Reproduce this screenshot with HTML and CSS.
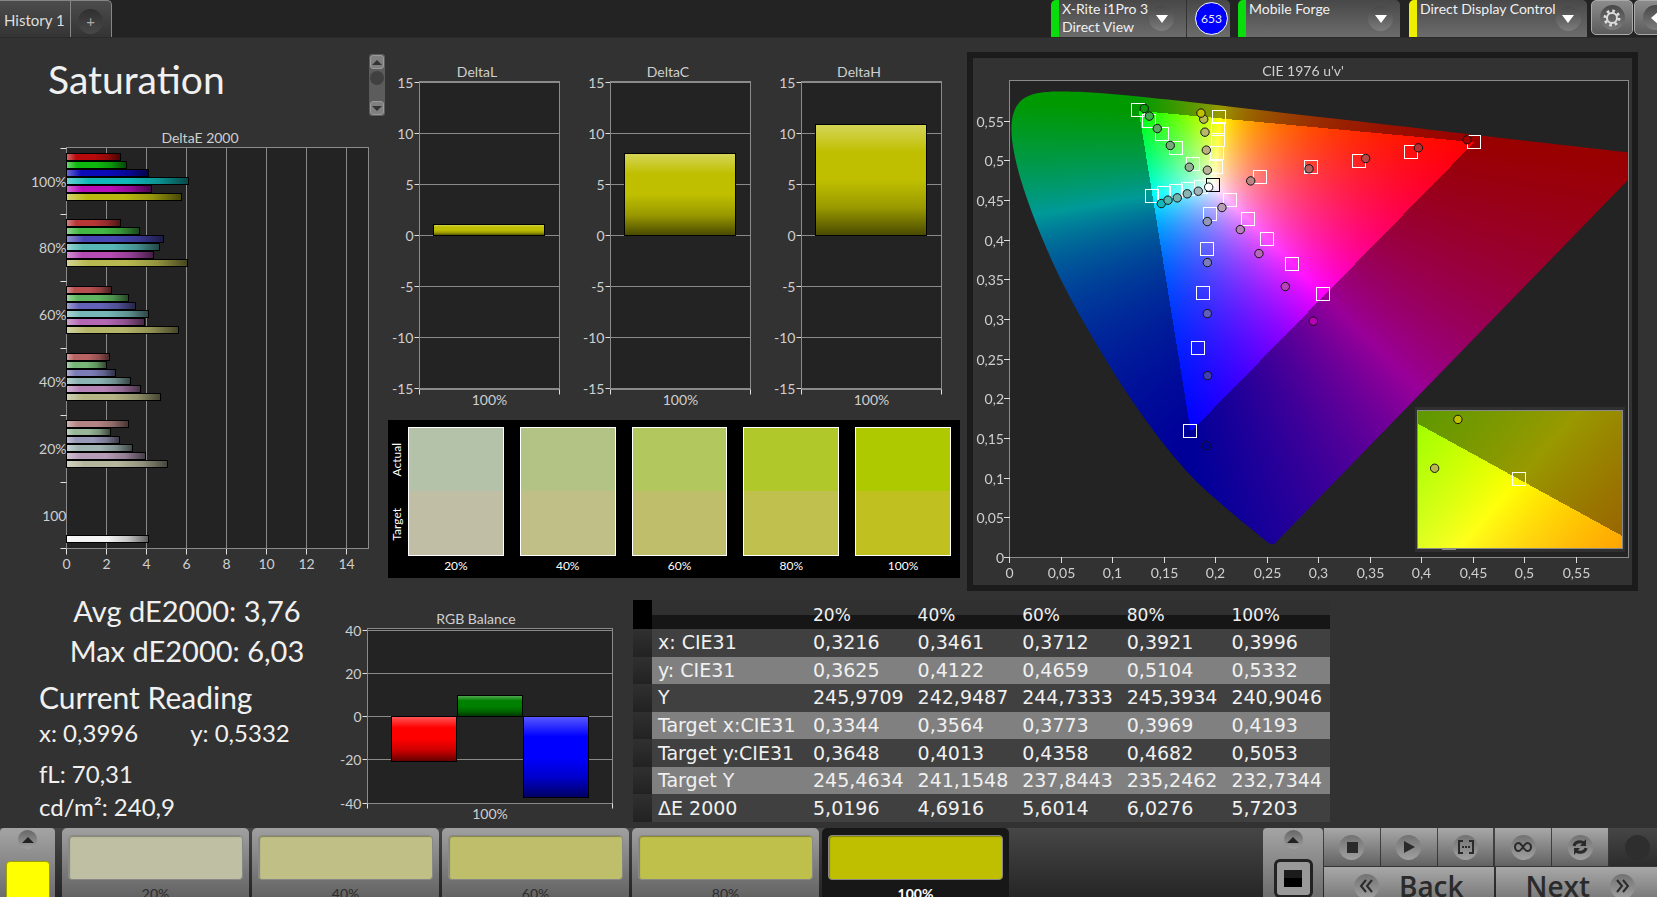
FILE: index.html
```
<!DOCTYPE html>
<html lang="en">
<head>
  <meta charset="UTF-8">
  <meta name="viewport" content="width=device-width, initial-scale=1.0">
  <title>Saturation - History 1</title>
  <link rel="stylesheet" href="styles.css">
</head>
<body>
<header class="topbar">
  <nav class="tabs">
    <button class="tab">History 1</button>
    <button class="tab tab-add" aria-label="Add history"><span class="dimple">+</span></button>
  </nav>
  <div class="devices">
    <button class="device device-meter">
      <span class="device-name">X-Rite i1Pro 3<br>Direct View</span>
      <span class="dimple"><svg width="12" height="8" viewBox="0 0 12 8"><path d="M0 0h12L6 8z" fill="#fff"/></svg></span>
    </button>
    <span class="meter-count"><span class="badge">653</span></span>
    <button class="device device-source">
      <span class="device-name">Mobile Forge</span>
      <span class="dimple"><svg width="12" height="8" viewBox="0 0 12 8"><path d="M0 0h12L6 8z" fill="#fff"/></svg></span>
    </button>
    <button class="device device-display">
      <span class="device-name">Direct Display Control</span>
      <span class="dimple"><svg width="12" height="8" viewBox="0 0 12 8"><path d="M0 0h12L6 8z" fill="#fff"/></svg></span>
    </button>
    <button class="tool" aria-label="Settings">
      <span class="dimple">
        <svg width="18" height="18" viewBox="0 0 18 18" fill="none" stroke="#ddd">
          <circle cx="9" cy="9" r="5" stroke-width="2"/>
          <circle cx="9" cy="9" r="7" stroke-width="3" stroke-dasharray="2.6 2.9"/>
        </svg>
      </span>
    </button>
    <button class="tool" aria-label="Collapse">
      <span class="dimple"><svg width="8" height="14" viewBox="0 0 8 14"><path d="M8 0v14L0 7z" fill="#fff"/></svg></span>
    </button>
  </div>
</header>

<main class="workspace">
  <section class="row row-charts">
    <div class="col-delta-e">
      <div class="title-row">
        <h1>Saturation</h1>
        <div class="scroller">
          <button aria-label="Previous"><svg width="10" height="5" viewBox="0 0 10 5"><path d="M0 5h10L5 0z" fill="#333"/></svg></button>
          <span class="thumb"></span>
          <button aria-label="Next"><svg width="10" height="5" viewBox="0 0 10 5"><path d="M0 0h10L5 5z" fill="#333"/></svg></button>
        </div>
      </div>
      <svg class="chart" id="deltaE" viewBox="0 0 385 455"></svg>
    </div>

    <div class="col-middle">
      <div class="delta-charts">
        <svg class="chart" id="deltaL" viewBox="0 0 191 350"></svg>
        <svg class="chart" id="deltaC" viewBox="0 0 191 350"></svg>
        <svg class="chart" id="deltaH" viewBox="0 0 191 350"></svg>
      </div>
      <div class="swatches">
        <div class="swatch-side"><span>Actual</span><span>Target</span></div>
        <figure class="swatch swatch-20"><div class="actual"></div><div class="target"></div><figcaption>20%</figcaption></figure>
        <figure class="swatch swatch-40"><div class="actual"></div><div class="target"></div><figcaption>40%</figcaption></figure>
        <figure class="swatch swatch-60"><div class="actual"></div><div class="target"></div><figcaption>60%</figcaption></figure>
        <figure class="swatch swatch-80"><div class="actual"></div><div class="target"></div><figcaption>80%</figcaption></figure>
        <figure class="swatch swatch-100"><div class="actual"></div><div class="target"></div><figcaption>100%</figcaption></figure>
      </div>
    </div>

    <div class="col-cie">
      <svg class="chart" id="cie" viewBox="0 0 659 527">
        <foreignObject x="37" y="23" width="618" height="476">
          <canvas id="gamut" width="618" height="476"></canvas>
        </foreignObject>
      </svg>
    </div>
  </section>

  <section class="row row-readings">
    <div class="readings">
      <div class="summary">
        <p>Avg dE2000: 3,76</p>
        <p>Max dE2000: 6,03</p>
      </div>
      <h2>Current Reading</h2>
      <p class="reading reading-xy"><span>x: 0,3996</span><span>y: 0,5332</span></p>
      <p class="reading">fL: 70,31</p>
      <p class="reading">cd/m²: 240,9</p>
    </div>

    <svg class="chart" id="rgbBalance" viewBox="0 0 285 223"></svg>

    <div class="data">
      <table class="data-table">
        <thead>
        <tr><th class="handle"></th><th class="name"></th><th>20%</th><th>40%</th><th>60%</th><th>80%</th><th>100%</th></tr>
        </thead>
        <tbody>
        <tr><td class="handle"></td><td>x: CIE31</td><td>0,3216</td><td>0,3461</td><td>0,3712</td><td>0,3921</td><td>0,3996</td></tr>
        <tr><td class="handle"></td><td>y: CIE31</td><td>0,3625</td><td>0,4122</td><td>0,4659</td><td>0,5104</td><td>0,5332</td></tr>
        <tr><td class="handle"></td><td>Y</td><td>245,9709</td><td>242,9487</td><td>244,7333</td><td>245,3934</td><td>240,9046</td></tr>
        <tr><td class="handle"></td><td>Target x:CIE31</td><td>0,3344</td><td>0,3564</td><td>0,3773</td><td>0,3969</td><td>0,4193</td></tr>
        <tr><td class="handle"></td><td>Target y:CIE31</td><td>0,3648</td><td>0,4013</td><td>0,4358</td><td>0,4682</td><td>0,5053</td></tr>
        <tr><td class="handle"></td><td>Target Y</td><td>245,4634</td><td>241,1548</td><td>237,8443</td><td>235,2462</td><td>232,7344</td></tr>
        <tr><td class="handle"></td><td>ΔE 2000</td><td>5,0196</td><td>4,6916</td><td>5,6014</td><td>6,0276</td><td>5,7203</td></tr>
        </tbody>
      </table>
    </div>
  </section>
</main>

<footer class="bottombar">
  <div class="side-panel side-color">
    <button class="dimple" aria-label="Expand colors"><svg width="12" height="6" viewBox="0 0 12 6"><path d="M0 6h12L6 0z" fill="#222"/></svg></button>
    <button class="color-chip" aria-label="Yellow"></button>
  </div>
  <div class="steps">
    <button class="step step-20"><span class="step-color"></span>20%</button>
    <button class="step step-40"><span class="step-color"></span>40%</button>
    <button class="step step-60"><span class="step-color"></span>60%</button>
    <button class="step step-80"><span class="step-color"></span>80%</button>
    <button class="step step-100 active"><span class="step-color"></span>100%</button>
  </div>
  <div class="side-panel side-window">
    <button class="dimple" aria-label="Expand window options"><svg width="12" height="6" viewBox="0 0 12 6"><path d="M0 6h12L6 0z" fill="#222"/></svg></button>
    <button class="window-chip" aria-label="Window size"><span></span></button>
  </div>
  <div class="transport">
    <div class="transport-row">
      <button aria-label="Stop"><span class="dimple"><svg width="12" height="12" viewBox="0 0 12 12"><path d="M1 1h11v11H1z" fill="#2a2a2a"/></svg></span></button>
      <button aria-label="Play"><span class="dimple"><svg width="12" height="14" viewBox="0 0 12 14"><path d="M1 1l11 6-11 6z" fill="#2a2a2a"/></svg></span></button>
      <button class="pair-end" aria-label="Measure range"><span class="dimple">
        <svg width="16" height="14" viewBox="0 0 16 14" fill="none" stroke="#2a2a2a" stroke-width="2"><path d="M5 1H1v12h4M11 1h4v12h-4M4 7h2M7 7h2M10 7h2"/></svg>
      </span></button>
      <button aria-label="Continuous"><span class="dimple">
        <svg width="18" height="10" viewBox="0 0 18 10" fill="none" stroke="#2a2a2a" stroke-width="2"><path d="M9 5C7 2 6 1 4.500 1a3.500 4 0 0 0 0 8C6 9 7 8 9 5s3-4 4.500-4a3.500 4 0 0 1 0 8C12 9 11 8 9 5z"/></svg>
      </span></button>
      <button aria-label="Refresh"><span class="dimple">
        <svg width="16" height="16" viewBox="0 0 16 16" fill="none" stroke="#2a2a2a" stroke-width="3"><path d="M2 7a6 5 0 0 1 10-3M14 9a6 5 0 0 1-10 3"/><path d="M14 0v7H8zM2 16V9h6z" fill="#2a2a2a" stroke="none"/></svg>
      </span></button>
      <button class="off" aria-label="Record" disabled><span class="dimple"></span></button>
    </div>
    <div class="transport-row transport-nav">
      <button class="pair-end"><span class="dimple">
        <svg width="14" height="14" viewBox="0 0 14 14" fill="none" stroke="#2a2a2a" stroke-width="2"><path d="M7 1L2 7l5 6M13 1L8 7l5 6"/></svg>
      </span><span class="nav-text">Back</span></button>
      <button><span class="nav-text">Next</span><span class="dimple">
        <svg width="14" height="14" viewBox="0 0 14 14" fill="none" stroke="#2a2a2a" stroke-width="2"><path d="M1 1l5 6-5 6M7 1l5 6-5 6"/></svg>
      </span></button>
    </div>
  </div>
</footer>
<script src="charts.js"></script>
</body>
</html>
```
FILE: styles.css
```
:root {
  --page: #323232;
  --plot: #232323;
  --line: #8a8a8a;
  --text: #f0f0f0;
  --axis: #cfcfcf;
}

* {
  margin: 0;
  padding: 0;
  box-sizing: border-box;
}

body {
  display: flex;
  flex-direction: column;
  height: 100vh;
  overflow: hidden;
  background: var(--page);
  color: var(--text);
  font-family: Lato, Calibri, sans-serif;
  font-size: 14px;
}

button {
  border: none;
  background: none;
  color: inherit;
  font: inherit;
  cursor: pointer;
}

.dimple {
  display: flex;
  flex: none;
  align-items: center;
  justify-content: center;
  width: 25px;
  height: 25px;
  border-radius: 50%;
  background: linear-gradient(#484848, #7c7c7c);
}

/* top bar */
.topbar {
  display: flex;
  flex: none;
  justify-content: space-between;
  height: 38px;
  background: var(--plot);
  border-bottom: 1px solid #2a2a2a;
  overflow: hidden;
}

.tabs {
  display: flex;
  height: 37px;
  border: 1px solid #868686;
  border-width: 1px 1px 0 0;
  border-radius: 0 5px 0 0;
  background: linear-gradient(#4c4c4c, #343434);
}

.tab {
  width: 70px;
  color: #ddd;
  padding: 2px 4px 0;
  font-size: 15px;
  text-align: left;
  white-space: nowrap;
}

.tab-add {
  width: 41px;
  padding: 4px 7px 0;
  border-left: 1px solid #868686;
}

.tab-add .dimple {
  background: linear-gradient(#303030, #484848);
  color: #aaa;
}

.devices {
  display: flex;
  margin-right: -20px;
}

.device {
  display: flex;
  align-items: center;
  justify-content: space-between;
  height: 37px;
  margin-right: 9px;
  padding: 0 7px 0 3px;
  border-left: 8px solid #0bdc0b;
  border-radius: 5px 5px 0 0;
  background: linear-gradient(#484848, #6c6c6c);
  text-align: left;
}

.device-name {
  align-self: flex-start;
  line-height: 18px;
  white-space: nowrap;
}

.device-meter {
  width: 135px;
  margin-right: 0;
  padding-right: 12px;
  border-radius: 5px 0 0 0;
}

.device-source {
  width: 162px;
}

.device-display {
  width: 178px;
  margin-right: 4px;
  border-left-color: #eeee00;
}

.meter-count {
  width: 44px;
  height: 37px;
  margin-right: 8px;
  padding: 2px 2px 0 8px;
  border-left: 1px solid #333;
  border-radius: 0 5px 0 0;
  background: linear-gradient(#484848, #6c6c6c);
}

.badge {
  display: flex;
  align-items: center;
  justify-content: center;
  width: 33px;
  height: 33px;
  border: 1px solid #fff;
  border-radius: 50%;
  background: #00f;
  font-size: 12px;
}

.tool {
  display: flex;
  align-items: center;
  justify-content: center;
  width: 42px;
  height: 35px;
  margin-right: 1px;
  border: 1px solid #aaa;
  border-radius: 5px;
  background: linear-gradient(#8c8c8c, #5c5c5c);
}

/* workspace */
.workspace {
  flex: 1;
  min-height: 0;
}

.row {
  display: grid;
}

.row-charts {
  grid-template-columns: 385fr 582fr 690fr;
  padding-top: 14px;
}

.row-readings {
  grid-template-columns: 335fr 285fr 1037fr;
  align-items: start;
}

.chart {
  display: block;
  width: 100%;
}

.chart text {
  fill: var(--axis);
  font-size: 14px;
}

.chart .plot {
  fill: var(--plot);
}

.chart .frame {
  fill: none;
  stroke: var(--line);
}

.chart .grid {
  stroke: var(--line);
}

.chart .tick {
  stroke: #e0e0e0;
}

.chart .bar {
  stroke: #000;
}

.chart .target-mark {
  fill: none;
  stroke: #fff;
}

.chart .reading-mark {
  stroke: #111;
}

#gamut,
#insetGamut {
  display: block;
}

.title-row {
  display: flex;
  justify-content: space-between;
  height: 72px;
  padding-left: 48px;
}

h1 {
  font-size: 39px;
  font-weight: 400;
  line-height: 54px;
}

.scroller {
  display: flex;
  flex-direction: column;
  align-items: center;
  width: 16px;
  height: 62px;
  margin-top: 2px;
  padding: 1px;
  border-radius: 3px;
  background: #5c5c5c;
}

.scroller button {
  display: flex;
  align-items: center;
  justify-content: center;
  width: 14px;
  height: 14px;
  border: 1px solid #999;
  border-radius: 3px;
  background: #808080;
}

.scroller .thumb {
  width: 14px;
  height: 14px;
  margin: 2px 0 auto;
  border-radius: 50%;
  background: #404040;
}

.delta-charts {
  display: grid;
  grid-template-columns: repeat(3, 1fr);
  padding: 10px 9px 8px 0;
}

.swatches {
  display: grid;
  grid-template-columns: 4px repeat(5, 1fr);
  column-gap: 16px;
  margin: 0 7px 0 3px;
  padding: 7px 9px 0 0;
  height: 158px;
  background: #000;
  color: #fff;
  font-size: 12px;
}

.swatch-side {
  display: flex;
  flex-direction: column;
  justify-content: space-around;
  align-items: center;
  height: 129px;
  margin-right: -12px;
}

.swatch-side span {
  writing-mode: vertical-rl;
  transform: rotate(180deg);
}

.swatch .actual,
.swatch .target {
  height: 64px;
  border: 1px solid #fff;
  border-bottom: none;
}

.swatch .target {
  height: 65px;
  border: 1px solid #fff;
  border-top: none;
}

.swatch figcaption {
  line-height: 20px;
  text-align: center;
}

.swatch-20 .actual { background: #b4c2a9; }
.swatch-40 .actual { background: #b2c385; }
.swatch-60 .actual { background: #b2c75e; }
.swatch-80 .actual { background: #b0c829; }
.swatch-100 .actual { background: #afc900; }
.swatch-20 .target { background: #c0bfa5; }
.swatch-40 .target { background: #c0bf87; }
.swatch-60 .target { background: #bfbf6b; }
.swatch-80 .target { background: #bfc04d; }
.swatch-100 .target { background: #c1c021; }

.col-cie {
  margin-right: 19px;
  border: 6px solid #1b1b1b;
}

/* readings */
.readings {
  padding-left: 39px;
  white-space: nowrap;
}

.summary {
  width: 296px;
  font-size: 29px;
  line-height: 40px;
  text-align: center;
}

.readings h2 {
  font-size: 30px;
  font-weight: 400;
  line-height: 44px;
  padding-top: 4px;
}

.reading {
  font-size: 24px;
  line-height: 33px;
}

.reading-xy {
  display: flex;
  gap: 52px;
  height: 38px;
  line-height: 28px;
}

#rgbBalance {
  margin-top: 14px;
}

.data {
  padding: 9px 0 0 13px;
}

.data-table {
  width: 697px;
  height: 222px;
  table-layout: fixed;
  border-collapse: collapse;
  font-family: "DejaVu Sans", sans-serif;
  font-size: 19px;
}

.data-table th {
  height: 29px;
  padding-left: 6px;
  background: linear-gradient(#303030 50%, #161616 50%);
  font-size: 17px;
  font-weight: 400;
  text-align: left;
}

.data-table td {
  padding-left: 6px;
  background: #404040;
  line-height: 27px;
  white-space: nowrap;
}

.data-table tr:nth-child(even) td {
  background: #808080;
}

.data-table .name {
  width: 155px;
}

.data-table th.handle {
  width: 19px;
  background: #000;
}

.data-table tbody tr td.handle {
  background: linear-gradient(#303030, #222);
}

/* bottom bar */
.bottombar {
  display: flex;
  flex: none;
  height: 69px;
  overflow: hidden;
  background: linear-gradient(#464646, #262626);
}

.side-panel {
  display: flex;
  flex: none;
  flex-direction: column;
  align-items: center;
  height: 90px;
  border-radius: 4px 4px 0 0;
  background: linear-gradient(#a4a4a4, #5c5c5c);
}

.side-panel .dimple {
  width: 19px;
  height: 19px;
  margin-top: 2px;
  background: linear-gradient(#666, #a0a0a0);
}

.side-color {
  width: 55px;
}

.color-chip {
  width: 44px;
  height: 60px;
  margin-top: 12px;
  border: 1px solid #a0a000;
  border-radius: 4px;
  background: #ff0;
}

.steps {
  display: flex;
  gap: 3px;
  margin-left: 7px;
  flex: 1;
}

.step {
  display: flex;
  flex: none;
  flex-direction: column;
  gap: 5px;
  align-items: center;
  width: 187px;
  height: 90px;
  padding-top: 7px;
  border-radius: 5px 5px 0 0;
  background: linear-gradient(#a0a0a0, #505050);
  color: #2c2c2c;
}

.step-color {
  flex: none;
  width: 175px;
  height: 45px;
  border: 1px solid #888;
  border-radius: 4px;
  box-shadow: inset 1px 1px 1px rgba(0, 0, 0, 0.3);
}

.step-20 .step-color { background: #bfbfa3; }
.step-40 .step-color { background: #bfbf86; }
.step-60 .step-color { background: #bfbf6b; }
.step-80 .step-color { background: #bfbf4b; }
.step-100 .step-color { background: #bfbf00; }

.step.active {
  background: #171717;
  color: #fff;
  font-weight: 700;
}

.side-window {
  width: 60px;
}

.side-window .dimple {
  margin-bottom: 2px;
}

.window-chip {
  display: flex;
  flex: none;
  align-items: center;
  justify-content: center;
  width: 39px;
  height: 39px;
  margin-top: 8px;
  border: 3px solid #222;
  border-radius: 6px;
  background: #999;
}

.window-chip span {
  width: 18px;
  height: 17px;
  background: linear-gradient(#1c1c1c 50%, #000 50%);
}

.transport {
  flex: none;
  width: 341px;
  margin: 0 -8px 0 1px;
}

.transport-row {
  display: flex;
  gap: 1px;
  height: 38px;
  margin-bottom: 1px;
}

.transport button {
  display: flex;
  flex: 1;
  align-items: center;
  justify-content: center;
  background: linear-gradient(#a8a8a8, #626262);
}

.transport .dimple {
  background: linear-gradient(#727272, #a0a0a0);
}

.transport .pair-end {
  margin-right: 1px;
}

.transport .off {
  background: linear-gradient(#464646, #2c2c2c);
}

.transport .off .dimple {
  background: #2e2e2e;
}

.transport .transport-nav button {
  gap: 20px;
  height: 60px;
  padding-bottom: 22px;
  color: #2a2a2a;
  background: linear-gradient(#a8a8a8, #505050);
}

.nav-text {
  font-family: "Open Sans", sans-serif;
  font-size: 28px;
  font-weight: 600;
}
```
FILE: charts.js
```
const NS = 'http://www.w3.org/2000/svg';

function add(parent, name, attrs, text) {
  const node = document.createElementNS(NS, name);
  for (const key in attrs) node.setAttribute(key, attrs[key]);
  if (text !== undefined) node.textContent = text;
  parent.appendChild(node);
  return node;
}

function line(svg, cls, x1, y1, x2, y2) {
  add(svg, 'line', { class: cls, x1: x1, y1: y1, x2: x2, y2: y2 });
}

function label(svg, x, y, anchor, text) {
  add(svg, 'text', { x: x, y: y, 'text-anchor': anchor }, text);
}

// light to dark sheen laid over every bar
function gloss(svg, id, vertical) {
  const defs = add(svg, 'defs', {});
  const grad = add(defs, 'linearGradient', vertical
    ? { id: id, x1: 0, y1: 0, x2: 0, y2: 1 }
    : { id: id, x1: 0, y1: 0, x2: 1, y2: 0 });
  [[0, '#fff', vertical ? 0.35 : 0.4], [vertical ? 0.25 : 0.18, '#fff', 0], [0.5, '#000', 0], [0.75, '#000', 0.2], [1, '#000', 0.62]]
    .forEach(s => add(grad, 'stop', { offset: s[0], 'stop-color': s[1], 'stop-opacity': s[2] }));
}

function bar(svg, x, y, w, h, color, glossId) {
  add(svg, 'rect', { x: x, y: y, width: w, height: h, fill: color });
  add(svg, 'rect', { class: 'bar', x: x, y: y, width: w, height: h, fill: 'url(#' + glossId + ')' });
}

// DeltaE 2000
function drawDeltaE() {
  const svg = document.getElementById('deltaE');
  const left = 66.5, top = 23.5, right = 368.5, bottom = 424.5, unit = 20.06;
  const step = (bottom - top) / 6;
  const groups = [
    ['100%', [2.68, 2.98, 4.07, 6.06, 4.22, 5.72], ['#b80a0a', '#0eb80e', '#0a0ab8', '#10b8b8', '#b80eb8', '#b8b810']],
    ['80%', [2.68, 3.62, 4.82, 4.62, 4.32, 6.03], ['#b83636', '#44b844', '#4646b4', '#58b6b6', '#b44cb4', '#b8b850']],
    ['60%', [2.23, 3.07, 3.42, 4.07, 3.89, 5.60], ['#b85050', '#60b660', '#6262b6', '#76b6b6', '#b468b4', '#b6b66a']],
    ['40%', [2.13, 1.98, 2.43, 3.17, 3.67, 4.69], ['#b86464', '#78b678', '#7c7cb6', '#8cb4b4', '#b684b6', '#b4b484']],
    ['20%', [3.07, 2.18, 2.62, 3.27, 3.92, 5.02], ['#b48484', '#98b698', '#9898b8', '#a0b4b4', '#b69cb6', '#b6b69e']],
    ['100', [0, 0, 0, 0, 0, 0, 4.07], ['', '', '', '', '', '', '#f4f4f4']]
  ];
  gloss(svg, 'glossH', false);
  add(svg, 'rect', { class: 'plot', x: left, y: top, width: right - left, height: bottom - top });
  for (let v = 0; v < 15; v += 2) {
    const x = Math.round(left + v * unit) - 0.5;
    line(svg, 'grid', x, top, x, bottom);
    line(svg, 'tick', x, bottom, x, bottom + 6);
    label(svg, x, 445, 'middle', v);
  }
  add(svg, 'rect', { class: 'frame', x: left, y: top, width: right - left, height: bottom - top });
  groups.forEach((g, i) => {
    const y = Math.round(top + i * step);
    line(svg, 'tick', left - 6, y + 0.5, left, y + 0.5);
    label(svg, left, y + 39, 'end', g[0]);
    g[1].forEach((v, n) => {
      if (v) bar(svg, left, y + n * 8 + 5.5, Math.round(v * unit), 7, g[2][n], 'glossH');
    });
  });
  line(svg, 'tick', left - 6, bottom, left, bottom);
  label(svg, 200, 19, 'middle', 'DeltaE 2000');
}

// vertical bar chart shared by DeltaL / DeltaC / DeltaH and RGB Balance
function drawColumns(id, o) {
  const svg = document.getElementById(id);
  const height = o.bottom - o.top;
  const zero = Math.floor(o.first + (o.bottom - o.first) / 2) - 0.5;
  const unit = (o.bottom - o.first) / 2 / o.max;
  gloss(svg, id + 'Gloss', true);
  add(svg, 'rect', { class: 'plot', x: o.left, y: o.top, width: o.right - o.left, height: height });
  for (let v = -o.max; v <= o.max; v += o.step) {
    const y = Math.round(zero - v * unit - 0.5) + 0.5;
    line(svg, 'grid', o.left, y, o.right, y);
    line(svg, 'tick', o.left - 5, y, o.left, y);
    label(svg, o.left - 6, y + 5.5, 'end', v);
  }
  add(svg, 'rect', { class: 'frame', x: o.left, y: o.top, width: o.right - o.left, height: height });
  line(svg, 'tick', o.left, o.bottom, o.left, o.bottom + 5);
  line(svg, 'tick', o.right, o.bottom, o.right, o.bottom + 5);
  o.bars.forEach(b => {
    const end = Math.round(zero - b.value * unit - 0.5) + 0.5;
    bar(svg, b.x, Math.min(zero, end), b.width, Math.abs(end - zero), b.color, id + 'Gloss');
  });
  label(svg, o.titleX, o.titleY, 'middle', o.title);
  label(svg, (o.left + o.right) / 2, o.bottom + 15.5, 'middle', '100%');
}

function drawDelta(id, title, value) {
  drawColumns(id, {
    title: title, titleX: 92, titleY: 15, left: 34.5, right: 174.5, top: 19.5, first: 21.5, bottom: 327.5,
    max: 15, step: 5, bars: [{ x: 48.5, width: 111, value: value, color: '#bfbf00' }]
  });
}

// CIE 1976 diagram
const LOCUS = [
  [.1741, .0050], [.1733, .0048], [.1714, .0051], [.1689, .0069], [.1644, .0109], [.1566, .0177], [.1440, .0297],
  [.1355, .0399], [.1241, .0578], [.1096, .0868], [.0913, .1327], [.0687, .2007], [.0454, .2950], [.0235, .4127],
  [.0082, .5384], [.0039, .6548], [.0139, .7502], [.0389, .8120], [.0743, .8338], [.1142, .8262], [.1547, .8059],
  [.2296, .7543], [.3016, .6923], [.3731, .6245], [.4441, .5547], [.5125, .4866], [.5752, .4242], [.6270, .3725],
  [.6915, .3083], [.7260, .2740], [.7347, .2653]
];

function toUv(x, y) {
  const d = 3 - 2 * x + 12 * y;
  return [4 * x / d, 9 * y / d];
}

function toXy(u, v) {
  const d = 6 * u - 16 * v + 12;
  return [9 * u / d, 4 * v / d];
}

function gamutColor(x, y) {
  const X = x / y, Z = (1 - x - y) / y;
  const rgb = [
    3.2406 * X - 1.5372 - 0.4986 * Z,
    -0.9689 * X + 1.8758 + 0.0415 * Z,
    0.0557 * X - 0.2040 + 1.0570 * Z
  ];
  const shade = Math.min(...rgb) < 0 ? 153 : 255;
  const max = Math.max(...rgb);
  return rgb.map(c => shade * Math.max(c, 0) / max);
}

function paint(canvas, toPoint) {
  const w = canvas.width, h = canvas.height;
  const ctx = canvas.getContext('2d');
  const image = ctx.createImageData(w, h);
  for (let j = 0; j < h; j++) {
    for (let i = 0; i < w; i++) {
      const p = toPoint((i + 0.5) / w, 1 - (j + 0.5) / h);
      const c = gamutColor(p[0], p[1]);
      image.data.set([c[0], c[1], c[2], 255], (j * w + i) * 4);
    }
  }
  ctx.putImageData(image, 0, 0);
}

function drawGamut() {
  const canvas = document.getElementById('gamut');
  const w = canvas.width, h = canvas.height;
  paint(canvas, (a, b) => toXy(a * 0.6, b * 0.6));
  // keep only what is inside the spectral locus, smoothed through its points
  const ctx = canvas.getContext('2d');
  const pts = LOCUS.map(p => toUv(p[0], p[1])).map(p => [p[0] / 0.6 * w, h - p[1] / 0.6 * h]);
  const last = pts.length - 1;
  ctx.globalCompositeOperation = 'destination-in';
  ctx.beginPath();
  ctx.moveTo(pts[0][0], pts[0][1]);
  for (let i = 0; i < last; i++) {
    const a = pts[Math.max(i - 1, 0)], b = pts[i], c = pts[i + 1], d = pts[Math.min(i + 2, last)];
    ctx.bezierCurveTo(
      b[0] + (c[0] - a[0]) / 6, b[1] + (c[1] - a[1]) / 6,
      c[0] - (d[0] - b[0]) / 6, c[1] - (d[1] - b[1]) / 6,
      c[0], c[1]
    );
  }
  ctx.closePath();
  ctx.fill();
}

const TARGETS = [
  [.1243, .5637], [.1353, .5494], [.1473, .5338], [.1612, .5158], [.1777, .4956],
  [.2032, .5545], [.2019, .5393], [.2017, .5258], [.2010, .5095], [.1997, .4914],
  [.1382, .4556], [.1492, .4586], [.1612, .4611], [.1728, .4637], [.1851, .4662],
  [.1942, .4325], [.1916, .3880], [.1877, .3329], [.1827, .2636], [.1750, .1589],
  [.2136, .4498], [.2314, .4262], [.2495, .4010], [.2738, .3695], [.3042, .3317],
  [.2427, .4792], [.2925, .4914], [.3388, .4994], [.3896, .5107], [.4502, .5237]
];

const READINGS = [
  [.1304, .5653, '#0a9a0a'], [.1353, .5557, '#3cae4c'], [.1430, .5401, '#5cac64'], [.1556, .5187, '#74ac78'], [.1741, .4914, '#94b094'],
  [.1881, .5519, '#b8b850'], [.1854, .5595, '#c0c000'], [.1893, .5355, '#b8b868'], [.1906, .5129, '#b8b080'], [.1916, .4876, '#b8b498'],
  [.1469, .4455, '#10b8b8'], [.1534, .4498, '#50b8b0'], [.1624, .4527, '#74b4b0'], [.1721, .4578, '#88b4b4'], [.1828, .4611, '#a0b4b8'],
  [.1929, .4662, '#ffffff'],
  [.1916, .4228, '#9498b8'], [.1916, .3711, '#7c7cb8'], [.1916, .3068, '#6060b8'], [.1919, .2286, '#4040b0'], [.1905, .1403, '#0000a0'],
  [.2058, .4405, '#b89cb8'], [.2236, .4127, '#b880b8'], [.2417, .3825, '#b868b8'], [.2673, .3409, '#b840b8'], [.2945, .2972, '#b800b8'],
  [.2337, .4741, '#b88484'], [.2903, .4893, '#b86060'], [.3453, .5023, '#b84848'], [.3965, .5158, '#b83030'], [.4437, .5259, '#a80000']
];

function square(svg, x, y, stroke) {
  const box = add(svg, 'rect', { class: 'target-mark', x: Math.round(x) - 6.5, y: Math.round(y) - 6.5, width: 13, height: 13 });
  if (stroke) box.style.stroke = stroke;
}

function dot(svg, x, y, fill) {
  add(svg, 'circle', { class: 'reading-mark', cx: x, cy: y, r: 4.2, fill: fill });
}

function drawCie() {
  const svg = document.getElementById('cie');
  const left = 37, top = 23, w = 618, h = 476, bottom = top + h;
  svg.insertBefore(add(svg, 'rect', { class: 'plot', x: left, y: top, width: w, height: h }), svg.firstChild);
  drawGamut();
  const px = u => left + u / 0.6 * w;
  const py = v => bottom - v / 0.6 * h;
  add(svg, 'rect', { class: 'frame', x: left - 0.5, y: top - 0.5, width: w + 1, height: h + 1 });
  for (let n = 0; n < 12; n++) {
    const value = n * 0.05;
    const text = String(Number(value.toFixed(2))).replace('.', ',');
    const x = Math.round(px(value)) - 0.5, y = Math.round(py(value)) + 0.5;
    line(svg, 'tick', x, bottom, x, bottom + 6);
    label(svg, x, bottom + 21, 'middle', text);
    line(svg, 'tick', left - 6, y, left, y);
    label(svg, left - 6, y + 5.5, 'end', text);
  }
  label(svg, 330, 18, 'middle', "CIE 1976 u'v'");
  TARGETS.forEach(p => square(svg, px(p[0]), py(p[1])));
  square(svg, px(.1971), py(.4691), '#000');
  READINGS.forEach(p => dot(svg, px(p[0]), py(p[1]), p[2]));

  // close-up of the selected colour, in xy
  const box = { x: 444, y: 352, w: 206, h: 139 };
  const area = { x: .3864, y: .4727, w: .0665, h: .0649 };
  add(svg, 'rect', { x: box.x - 2, y: box.y - 3, width: box.w + 4, height: box.h + 6, fill: '#303030' });
  line(svg, 'grid', box.x + 25, box.y + box.h + 0.5, box.x + 39, box.y + box.h + 0.5);
  const holder = add(svg, 'foreignObject', { x: box.x, y: box.y, width: box.w, height: box.h });
  const canvas = document.createElement('canvas');
  canvas.id = 'insetGamut';
  canvas.width = box.w;
  canvas.height = box.h;
  holder.appendChild(canvas);
  paint(canvas, (a, b) => [area.x + a * area.w, area.y + b * area.h]);
  add(svg, 'rect', { class: 'frame', x: box.x + 0.5, y: box.y + 0.5, width: box.w - 1, height: box.h - 1 });
  const ix = x => box.x + (x - area.x) / area.w * box.w;
  const iy = y => box.y + box.h - (y - area.y) / area.h * box.h;
  square(svg, ix(.4193), iy(.5053));
  dot(svg, ix(.3996), iy(.5332), '#c0c000');
  dot(svg, ix(.3921), iy(.5104), '#b8b850');
}

drawDeltaE();
drawDelta('deltaL', 'DeltaL', 1.05);
drawDelta('deltaC', 'DeltaC', 8);
drawDelta('deltaH', 'DeltaH', 10.9);
drawColumns('rgbBalance', {
  title: 'RGB Balance', titleX: 141, titleY: 19, left: 32.5, right: 277.5, top: 23.5, first: 25.5, bottom: 198.5,
  max: 40, step: 20,
  bars: [
    { x: 56.5, width: 65, value: -20.7, color: '#ff0000' },
    { x: 122.5, width: 65, value: 9.6, color: '#008000' },
    { x: 188.5, width: 65, value: -37.3, color: '#0000ff' }
  ]
});
drawCie();
```
